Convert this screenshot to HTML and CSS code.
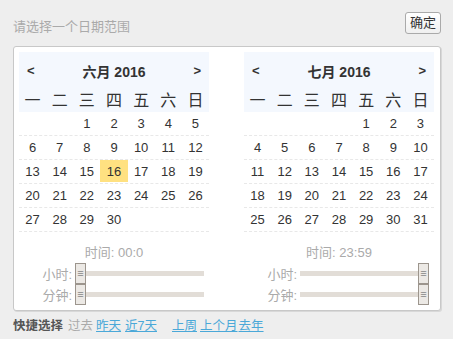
FILE: index.html
```html
<!DOCTYPE html>
<html>
<head>
<meta charset="utf-8">
<link rel="stylesheet" href="styles.css">
</head>
<body>
<div class="wrap">
  <div class="top">
    <span class="title">请选择一个日期范围</span>
    <button class="ok">确定</button>
  </div>
  <div class="box">
    <div class="cal">
      <div class="head">
        <div class="nav"><span class="arrow">&lt;</span><span class="month">六月 2016</span><span class="arrow">&gt;</span></div>
        <div class="week"><span>一</span><span>二</span><span>三</span><span>四</span><span>五</span><span>六</span><span>日</span></div>
      </div>
      <div class="row"><span></span><span></span><span>1</span><span>2</span><span>3</span><span>4</span><span>5</span></div>
      <div class="row"><span>6</span><span>7</span><span>8</span><span>9</span><span>10</span><span>11</span><span>12</span></div>
      <div class="row"><span>13</span><span>14</span><span>15</span><span class="sel">16</span><span>17</span><span>18</span><span>19</span></div>
      <div class="row"><span>20</span><span>21</span><span>22</span><span>23</span><span>24</span><span>25</span><span>26</span></div>
      <div class="row"><span>27</span><span>28</span><span>29</span><span>30</span><span></span><span></span><span></span></div>
      <div class="time">
        <div class="tlabel">时间: 00:0</div>
        <div class="slider"><span class="slabel">小时:</span><div class="track"><span class="handle start">≡</span></div></div>
        <div class="slider"><span class="slabel">分钟:</span><div class="track"><span class="handle start">≡</span></div></div>
      </div>
    </div>
    <div class="cal">
      <div class="head">
        <div class="nav"><span class="arrow">&lt;</span><span class="month">七月 2016</span><span class="arrow">&gt;</span></div>
        <div class="week"><span>一</span><span>二</span><span>三</span><span>四</span><span>五</span><span>六</span><span>日</span></div>
      </div>
      <div class="row"><span></span><span></span><span></span><span></span><span>1</span><span>2</span><span>3</span></div>
      <div class="row"><span>4</span><span>5</span><span>6</span><span>7</span><span>8</span><span>9</span><span>10</span></div>
      <div class="row"><span>11</span><span>12</span><span>13</span><span>14</span><span>15</span><span>16</span><span>17</span></div>
      <div class="row"><span>18</span><span>19</span><span>20</span><span>21</span><span>22</span><span>23</span><span>24</span></div>
      <div class="row"><span>25</span><span>26</span><span>27</span><span>28</span><span>29</span><span>30</span><span>31</span></div>
      <div class="time">
        <div class="tlabel">时间: 23:59</div>
        <div class="slider"><span class="slabel">小时:</span><div class="track"><span class="handle end">≡</span></div></div>
        <div class="slider"><span class="slabel">分钟:</span><div class="track"><span class="handle end">≡</span></div></div>
      </div>
    </div>
  </div>
  <div class="quick">
    <b>快捷选择</b><span class="past">过去</span><a href="#">昨天</a><a href="#">近7天</a><a href="#" class="gap">上周</a><a href="#" class="tight">上个月</a><a href="#" class="tight">去年</a>
  </div>
</div>
</body>
</html>
```
FILE: styles.css
```css
html, body {
  margin: 0;
  padding: 0;
  background: #eeeeee;
  font-family: "Liberation Sans", "Noto Sans CJK SC", sans-serif;
  font-size: 13px;
  color: #333;
}
.wrap {
  width: 453px;
  height: 339px;
  box-sizing: border-box;
  padding: 12px 12px 0 13px;
}
.top {
  display: flex;
  justify-content: space-between;
  align-items: center;
  height: 22px;
}
.title {
  color: #aaa;
  font-size: 13px;
  margin-top: 5px;
}
.ok {
  font-family: "Liberation Sans", "Noto Sans CJK SC", sans-serif;
  font-size: 13px;
  color: #333;
  height: 22px;
  padding: 0 4px;
  border: 1px solid #aaa;
  border-radius: 3px;
  background: linear-gradient(#fff, #f0f0f0);
  line-height: 18px;
}
.box {
  margin-top: 12px;
  background: #fff;
  border: 1px solid #c8c8c8;
  border-radius: 3px;
  box-shadow: 1px 1px 0 #d8d8d8;
  display: flex;
  gap: 35px;
  padding: 5px 6px 6px 5px;
  height: 265px;
  box-sizing: border-box;
}
.cal {
  width: 190px;
}
.head {
  background: #f4f8fe;
}
.nav {
  display: flex;
  justify-content: space-between;
  align-items: center;
  height: 37px;
  padding: 0 8px;
  font-weight: bold;
  font-size: 14px;
}
.month {
  font-size: 14px;
  color: #333;
}
.arrow {
  font-size: 13px;
  color: #333;
}
.week, .row {
  display: grid;
  grid-template-columns: repeat(7, 1fr);
  text-align: center;
}
.week {
  height: 23px;
  line-height: 23px;
  font-size: 16px;
  color: #333;
}
.row {
  height: 24px;
  line-height: 23px;
  border-bottom: 1px dashed #e8e8e8;
  box-sizing: border-box;
  font-size: 13px;
}
.row span {
  display: block;
}
.sel {
  background: #ffe181;
  height: 22px;
}
.time {
  padding-top: 12px;
}
.tlabel {
  text-align: center;
  color: #aaa;
  height: 18px;
  line-height: 18px;
  margin-bottom: 1px;
}
.slider {
  display: flex;
  align-items: center;
  height: 21px;
}
.slabel {
  width: 56px;
  text-align: right;
  color: #aaa;
  padding-right: 3px;
  box-sizing: border-box;
}
.track {
  position: relative;
  flex: 1;
  margin-right: 5px;
  height: 5px;
  background: #e2ddd7;
}
.handle {
  position: absolute;
  top: -8px;
  width: 9px;
  height: 19px;
  border: 1px solid #9c958d;
  background: #ece9e5;
  color: #888;
  font-size: 11px;
  line-height: 19px;
  text-align: center;
}
.handle.start { left: 0; }
.handle.end { right: 0; }
.quick {
  margin-top: 4px;
  color: #aaa;
  font-size: 12.5px;
  display: flex;
  align-items: baseline;
}
.quick b {
  color: #555;
  margin-right: 5px;
}
.quick .past {
  margin-right: 3px;
}
.quick a {
  color: #4aa8d8;
  text-decoration: underline;
  margin-right: 4px;
}
.quick a.gap {
  margin-left: 11px;
  margin-right: 3px;
}
.quick a.tight {
  margin-right: 1px;
}
```
